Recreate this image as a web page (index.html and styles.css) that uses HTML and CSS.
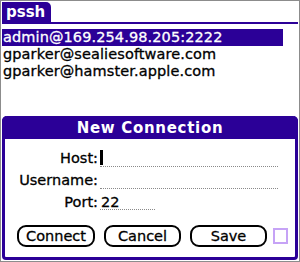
FILE: index.html
```html
<!DOCTYPE html>
<html>
<head>
<meta charset="utf-8">
<link rel="stylesheet" href="styles.css">
</head>
<body>
<div class="screen">
  <div class="titlebar"><span class="tab">pssh</span></div>
  <ul class="hosts">
    <li class="host selected">admin@169.254.98.205:2222</li>
    <li class="host">gparker@sealiesoftware.com</li>
    <li class="host">gparker@hamster.apple.com</li>
  </ul>
  <div class="dialog">
    <div class="dialog-title">New Connection</div>
    <div class="dialog-body">
      <div class="form">
        <div class="label">Host:</div>
        <div class="field wide"><span class="cursor"></span></div>
        <div class="label">Username:</div>
        <div class="field wide"></div>
        <div class="label">Port:</div>
        <div class="field short">22</div>
      </div>
      <div class="buttons">
        <button class="btn">Connect</button>
        <button class="btn">Cancel</button>
        <button class="btn">Save</button>
        <span class="check"></span>
      </div>
    </div>
  </div>
</div>
</body>
</html>
```

FILE: styles.css
```css
html, body {
  margin: 0;
  padding: 0;
  background: #fff;
}
.screen {
  width: 300px;
  height: 262px;
  box-sizing: border-box;
  border: 1px solid #8c8c8c;
  padding: 1px;
  font-family: "DejaVu Sans", sans-serif;
  font-size: 14.5px;
  -webkit-text-stroke: 0.3px currentColor;
  color: #000;
  display: flex;
  flex-direction: column;
  overflow: hidden;
}
.titlebar {
  height: 20px;
  border-bottom: 2px solid #2b0097;
  display: flex;
}
.tab {
  width: 49px;
  height: 20px;
  background: #2b0097;
  color: #fff;
  font-weight: bold;
  font-size: 15px;
  line-height: 20px;
  padding-left: 4px;
  box-sizing: border-box;
  border-top-right-radius: 5px;
  -webkit-text-stroke: 0;
}
.hosts {
  list-style: none;
  margin: 5px 0 0 0;
  padding: 0;
}
.host {
  height: 17px;
  line-height: 17px;
  padding-left: 1px;
  width: 281px;
  box-sizing: border-box;
  letter-spacing: 0.1px;
  white-space: nowrap;
}
.selected {
  background: #2b0097;
  color: #fff;
}
.dialog {
  margin-top: 36px;
  height: 144px;
  box-sizing: border-box;
  border: 3px solid #2b0097;
  border-top: 0;
  border-radius: 5px 5px 4px 4px;
  display: flex;
  flex-direction: column;
}
.dialog-title {
  height: 23px;
  margin: 0 -3px;
  background: #2b0097;
  color: #fff;
  font-weight: bold;
  font-size: 15px;
  letter-spacing: 0.7px;
  line-height: 24px;
  text-align: center;
  border-radius: 5px 5px 0 0;
  -webkit-text-stroke: 0;
}
.dialog-body {
  padding: 11px 0 0 0;
}
.form {
  display: grid;
  grid-template-columns: 93px auto;
  column-gap: 2px;
  row-gap: 5px;
  justify-items: start;
}
.label {
  justify-self: end;
  line-height: 16px;
  height: 17px;
}
.field {
  height: 16px;
  line-height: 16px;
  border-bottom: 1px dotted #8a8a8a;
  display: flex;
  align-items: center;
}
.wide {
  width: 178px;
}
.short {
  width: 55px;
  padding-left: 1px;
  box-sizing: border-box;
}
.cursor {
  width: 3px;
  height: 15px;
  background: #000;
  margin-top: -1px;
}
.buttons {
  display: flex;
  align-items: center;
  margin-top: 14px;
  padding-left: 12px;
  gap: 9px;
}
.btn {
  width: 78px;
  height: 22px;
  border: 2px solid #000;
  border-radius: 9px;
  background: #fff;
  font-family: "DejaVu Sans", sans-serif;
  font-size: 14.5px;
  -webkit-text-stroke: 0.3px currentColor;
  color: #000;
  padding: 0;
  line-height: 16px;
}
.btn + .btn {
  width: 77px;
}
.check {
  width: 15px;
  height: 16px;
  box-sizing: border-box;
  border: 2px solid #c6a3f6;
  margin-left: -3px;
}
```
